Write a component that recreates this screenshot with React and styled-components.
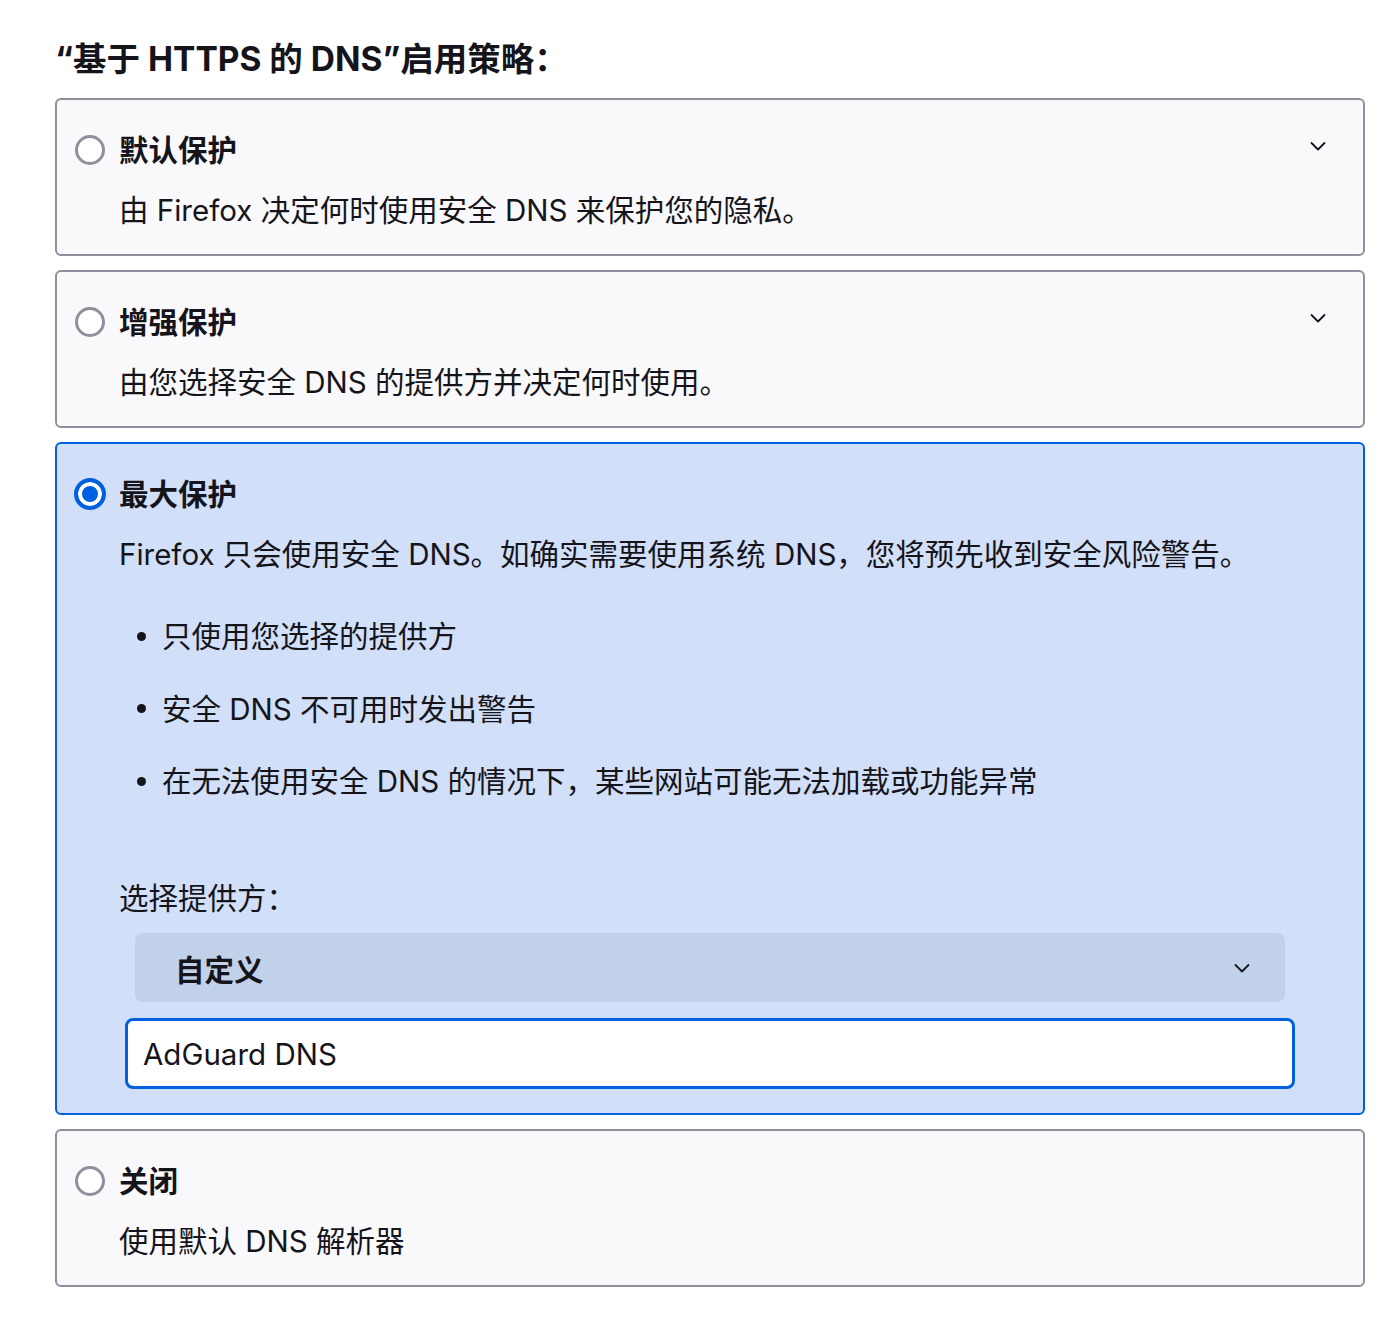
import styled, { createGlobalStyle, css } from "styled-components";

const GlobalStyle = createGlobalStyle`
  body {
    margin: 0;
    background: #fff;
    color: #15141a;
    font-family: "Inter", "Noto Sans CJK SC", sans-serif;
  }
`;

const options = [
  {
    id: "default",
    title: "默认保护",
    desc: "由 Firefox 决定何时使用安全 DNS 来保护您的隐私。",
  },
  {
    id: "increased",
    title: "增强保护",
    desc: "由您选择安全 DNS 的提供方并决定何时使用。",
  },
  {
    id: "max",
    title: "最大保护",
    desc: "Firefox 只会使用安全 DNS。如确实需要使用系统 DNS，您将预先收到安全风险警告。",
    selected: true,
    bullets: [
      "只使用您选择的提供方",
      "安全 DNS 不可用时发出警告",
      "在无法使用安全 DNS 的情况下，某些网站可能无法加载或功能异常",
    ],
  },
  {
    id: "off",
    title: "关闭",
    desc: "使用默认 DNS 解析器",
    noChevron: true,
  },
];

function Chevron() {
  return (
    <svg width="18" height="18" viewBox="0 0 18 18" fill="none">
      <path d="M2.5 6l6.5 6.5L15.5 6" stroke="#15141a" strokeWidth="1.8" strokeLinecap="round" strokeLinejoin="round" />
    </svg>
  );
}

export default function App() {
  return (
    <Page>
      <GlobalStyle />
      <Heading>“基于 HTTPS 的 DNS”启用策略：</Heading>
      <CardList>
        {options.map((o) => (
          <Card key={o.id} selected={o.selected}>
            <Header>
              <Radio selected={o.selected} />
              <Title>{o.title}</Title>
              {!o.selected && !o.noChevron && (
                <ChevronBox>
                  <Chevron />
                </ChevronBox>
              )}
            </Header>
            <Body>
              <Desc>{o.desc}</Desc>
              {o.bullets && (
                <>
                  <Bullets>
                    {o.bullets.map((b) => (
                      <li key={b}>{b}</li>
                    ))}
                  </Bullets>
                  <Label>选择提供方：</Label>
                  <Select>
                    <span>自定义</span>
                    <Chevron />
                  </Select>
                  <Input defaultValue="AdGuard DNS" />
                </>
              )}
            </Body>
          </Card>
        ))}
      </CardList>
    </Page>
  );
}

const Page = styled.div`
  padding: 39px 29px 40px 55px;
`;

const Heading = styled.h2`
  margin: 0 0 19px;
  font-size: 33.5px;
  line-height: 40px;
  font-weight: 700;
`;

const CardList = styled.div`
  display: flex;
  flex-direction: column;
  gap: 14px;
`;

const Card = styled.div`
  border: 2px solid #8f8f9d;
  border-radius: 6px;
  background: #f9f9fb;
  padding: 32px 29px 26px 18px;
  ${({ selected }) =>
    selected &&
    css`
      border-color: #0060df;
      background: #d1dff8;
      padding-bottom: 24px;
    `}
`;

const Header = styled.div`
  display: flex;
  align-items: center;
  gap: 14px;
  height: 36px;
`;

const Radio = styled.span`
  box-sizing: border-box;
  flex: none;
  width: 30px;
  height: 30px;
  border-radius: 50%;
  border: 3px solid #8f8f9d;
  background: #fff;
  ${({ selected }) =>
    selected &&
    css`
      width: 32px;
      height: 32px;
      margin: 0 -1px;
      border: 4px solid #0060df;
      background: #0060df;
      box-shadow: inset 0 0 0 4px #fff;
    `}
`;

const Title = styled.span`
  font-size: 29.5px;
  font-weight: 700;
  line-height: 36px;
`;

const ChevronBox = styled.span`
  margin-left: auto;
  width: 32px;
  height: 32px;
  display: flex;
  align-items: center;
  justify-content: center;
  margin-bottom: 8px;
`;

const Body = styled.div`
  margin-left: 44px;
  display: flex;
  flex-direction: column;
`;

const Desc = styled.p`
  margin: 24px 0 0;
  font-size: 29.5px;
  line-height: 36px;
`;

const Bullets = styled.ul`
  margin: 46px 0 0;
  padding: 0;
  list-style: none;
  display: flex;
  flex-direction: column;
  gap: 36.5px;

  li {
    display: flex;
    align-items: center;
    gap: 16px;
    font-size: 29.5px;
    line-height: 36px;
    margin-left: 18px;
  }

  li::before {
    content: "";
    flex: none;
    width: 9px;
    height: 9px;
    border-radius: 50%;
    background: #15141a;
  }
`;

const Label = styled.div`
  margin-top: 81px;
  font-size: 29.5px;
  line-height: 36px;
`;

const Select = styled.div`
  margin: 17px 49px 0 16px;
  height: 69px;
  border-radius: 8px;
  background: #c2d1ea;
  display: flex;
  align-items: center;
  justify-content: space-between;
  padding: 0 34px 0 40px;
  font-size: 29.5px;
  font-weight: 700;
`;

const Input = styled.input`
  box-sizing: border-box;
  margin: 16px 39px 0 6px;
  height: 71px;
  border: 3px solid #0060df;
  border-radius: 8px;
  background: #fff;
  padding: 0 15px;
  font-family: "Inter", "Noto Sans CJK SC", sans-serif;
  font-size: 29.5px;
  color: #15141a;
  outline: none;
`;
